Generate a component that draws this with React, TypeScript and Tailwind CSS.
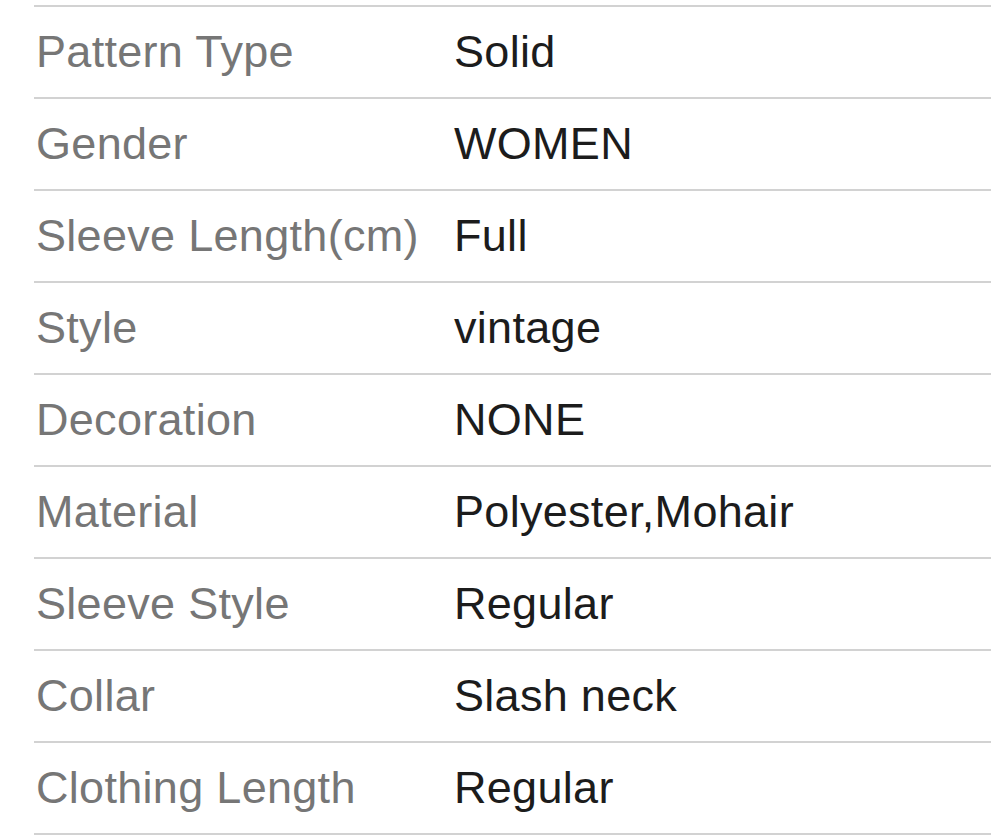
const rows: [string, string][] = [
  ["Pattern Type", "Solid"],
  ["Gender", "WOMEN"],
  ["Sleeve Length(cm)", "Full"],
  ["Style", "vintage"],
  ["Decoration", "NONE"],
  ["Material", "Polyester,Mohair"],
  ["Sleeve Style", "Regular"],
  ["Collar", "Slash neck"],
  ["Clothing Length", "Regular"],
];

export default function App() {
  return (
    <div className="min-h-[837px] bg-white pt-[5px] pl-[34px] font-['Liberation_Sans',Arial,sans-serif] text-[45px] tracking-[0.3px]">
      <div className="border-b-2 border-[#d2d2d2]">
        {rows.map(([label, value]) => (
          <div key={label} className="flex h-[92px] items-center border-t-2 border-[#d2d2d2]">
            <div className="w-[420px] pl-[2px] text-[#767676]">{label}</div>
            <div className="text-[#1c1c1c]">{value}</div>
          </div>
        ))}
      </div>
    </div>
  );
}
